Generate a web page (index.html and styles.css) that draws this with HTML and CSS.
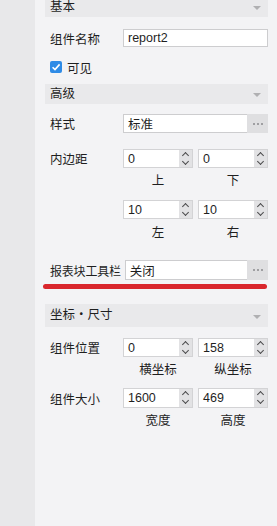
FILE: index.html
```html
<!DOCTYPE html>
<html lang="zh-CN">
<head>
  <meta charset="UTF-8" />
  <title>组件属性</title>
  <link rel="stylesheet" href="styles.css">
</head>
<body>
<div class="app">
  <div class="rail"></div>

  <div class="panel">
    <!-- 基本 -->
    <div class="section-head head-first">基本<span class="caret"></span></div>
    <div class="row row-name">
      <div class="label">组件名称</div>
      <div class="box box-full">report2</div>
    </div>
    <div class="row row-check">
      <span class="check">
        <svg width="12" height="12" viewBox="0 0 12 12"><path d="M2.6 6.2 L5 8.6 L9.6 3.4" fill="none" stroke="#fff" stroke-width="1.6"/></svg>
      </span>
      <span>可见</span>
    </div>

    <!-- 高级 -->
    <div class="section-head head-mid">高级<span class="caret"></span></div>
    <div class="row row-style">
      <div class="label">样式</div>
      <div class="box box-btn">标准</div>
      <div class="more"><i></i><i></i><i></i></div>
    </div>

    <div class="row row-spin1">
      <div class="label">内边距</div>
      <div class="spin"><span class="num">0</span><span class="arrows"><b class="up"></b><b class="down"></b></span></div>
      <div class="spin"><span class="num">0</span><span class="arrows"><b class="up"></b><b class="down"></b></span></div>
    </div>
    <div class="row caps caps1">
      <div class="label"></div>
      <div class="cap">上</div>
      <div class="cap">下</div>
    </div>
    <div class="row row-spin2">
      <div class="label"></div>
      <div class="spin"><span class="num">10</span><span class="arrows"><b class="up"></b><b class="down"></b></span></div>
      <div class="spin"><span class="num">10</span><span class="arrows"><b class="up"></b><b class="down"></b></span></div>
    </div>
    <div class="row caps caps2">
      <div class="label"></div>
      <div class="cap">左</div>
      <div class="cap">右</div>
    </div>

    <div class="row row-toolbar">
      <div class="label label-wide">报表块工具栏</div>
      <div class="box box-btn">关闭</div>
      <div class="more"><i></i><i></i><i></i></div>
    </div>
    <div class="mark"></div>

    <!-- 坐标・尺寸 -->
    <div class="section-head head-last">坐标・尺寸<span class="caret"></span></div>
    <div class="row row-pos">
      <div class="label">组件位置</div>
      <div class="spin"><span class="num">0</span><span class="arrows"><b class="up"></b><b class="down"></b></span></div>
      <div class="spin"><span class="num">158</span><span class="arrows"><b class="up"></b><b class="down"></b></span></div>
    </div>
    <div class="row caps caps3">
      <div class="label"></div>
      <div class="cap">横坐标</div>
      <div class="cap">纵坐标</div>
    </div>
    <div class="row row-size">
      <div class="label">组件大小</div>
      <div class="spin"><span class="num">1600</span><span class="arrows"><b class="up"></b><b class="down"></b></span></div>
      <div class="spin"><span class="num">469</span><span class="arrows"><b class="up"></b><b class="down"></b></span></div>
    </div>
    <div class="row caps caps3">
      <div class="label"></div>
      <div class="cap">宽度</div>
      <div class="cap">高度</div>
    </div>
  </div>
</div>
</body>
</html>
```

FILE: styles.css
```css
* {
  box-sizing: border-box;
}

body {
  margin: 0;
  font-family: "Liberation Sans", "Noto Sans CJK SC", sans-serif;
  font-size: 12px;
  color: #1f1f1f;
  background: #f3f3f5;
}

.app {
  display: flex;
  width: 277px;
  height: 526px;
  overflow: hidden;
}

.rail {
  width: 35px;
  flex: 0 0 35px;
  background: #e8e8ea;
}

.panel {
  flex: 1;
  display: flex;
  flex-direction: column;
  padding: 0 9px 0 10px;
  background: #f3f3f5;
}

/* section headers */
.section-head {
  position: relative;
  height: 20px;
  line-height: 20px;
  padding-left: 5px;
  background: #e9e9eb;
  font-size: 12.5px;
}

.head-first {
  margin-top: -3px;
}

.head-mid {
  margin-top: 11px;
}

.head-last {
  margin-top: 15px;
  height: 23px;
  line-height: 23px;
}

.caret {
  position: absolute;
  right: 7px;
  top: 50%;
  margin-top: -1px;
  width: 0;
  height: 0;
  border-left: 4px solid transparent;
  border-right: 4px solid transparent;
  border-top: 4px solid #b0b0b2;
}

/* rows */
.row {
  display: flex;
  align-items: center;
  padding-left: 5px;
}

.label {
  flex: 0 0 73px;
  font-size: 12.5px;
}

.label-wide {
  flex: 0 0 auto;
  margin-right: 4px;
  font-size: 12px;
  letter-spacing: -0.2px;
}

.row-name {
  margin-top: 12px;
  height: 18px;
}

.row-check {
  margin-top: 14px;
  height: 12px;
  gap: 5px;
  font-size: 12.5px;
}

.check {
  width: 12px;
  height: 12px;
  border-radius: 2px;
  background: #2e8be6;
  display: flex;
}

.row-style {
  margin-top: 10px;
  height: 19px;
}

.row-spin1 {
  margin-top: 16px;
  height: 19px;
  gap: 5px;
}

.row-spin1 .label,
.row-spin2 .label,
.row-pos .label,
.row-size .label {
  margin-right: -5px;
}

.row-spin2 {
  margin-top: 12px;
  height: 19px;
  gap: 5px;
}

.row-toolbar {
  margin-top: 20px;
  height: 20px;
}

.row-pos {
  margin-top: 11px;
  height: 19px;
  gap: 5px;
}

.row-size {
  margin-top: 11px;
  height: 20px;
  gap: 5px;
}

/* inputs */
.box {
  height: 100%;
  display: flex;
  align-items: center;
  padding-left: 4px;
  background: #ffffff;
  border: 1px solid #cdcdcf;
  font-size: 12.5px;
}

.box-full {
  flex: 1;
}

.box-btn {
  flex: 1;
  border-right: none;
}

.more {
  flex: 0 0 21px;
  height: 100%;
  background: #dfdfe1;
  display: flex;
  align-items: center;
  justify-content: center;
  gap: 2px;
}

.more i {
  width: 2px;
  height: 2px;
  border-radius: 50%;
  background: #8a8a8c;
}

.spin {
  flex: 0 0 70px;
  height: 100%;
  display: flex;
  background: #ffffff;
  border: 1px solid #d3d3d5;
}

.num {
  flex: 1;
  display: flex;
  align-items: center;
  padding-left: 4px;
  font-size: 12.5px;
}

.arrows {
  flex: 0 0 13px;
  background: #e2e2e4;
  display: flex;
  flex-direction: column;
  align-items: center;
  justify-content: center;
  gap: 4px;
}

.arrows b {
  width: 5px;
  height: 5px;
  border-left: 1px solid #4a4a4c;
  border-top: 1px solid #4a4a4c;
}

.arrows .up {
  transform: translateY(1px) rotate(45deg);
}

.arrows .down {
  transform: translateY(-2px) rotate(225deg);
}

/* captions under spinners */
.caps {
  height: 14px;
  gap: 5px;
}

.caps .label {
  margin-right: -5px;
}

.caps1 {
  margin-top: 6px;
}

.caps2 {
  margin-top: 7px;
}

.caps3 {
  margin-top: 6px;
}

.cap {
  flex: 0 0 70px;
  text-align: center;
  font-size: 12.5px;
  line-height: 14px;
}

/* red hand-drawn underline */
.mark {
  margin: 4px 1px 0 -2px;
  height: 5px;
  border-radius: 3px;
  background: #d9262c;
}
```
